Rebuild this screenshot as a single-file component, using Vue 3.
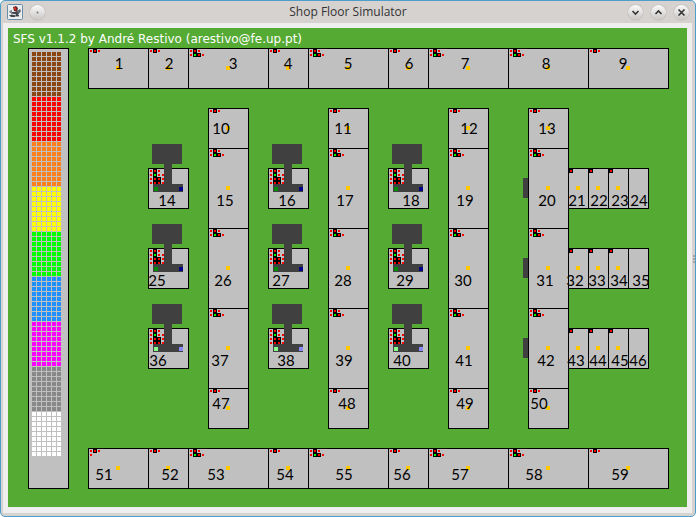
<script setup>
const TITLE = 'Shop Floor Simulator'
const CREDIT = 'SFS v1.1.2 by André Restivo (arestivo@fe.up.pt)'

// Warehouse stock: one band of nine rows by six columns per piece colour
const stockColours = ['#8b4513', '#ff0000', '#ff7f1a', '#ffff00', '#00ff00', '#1e90ff', '#ff00ff', '#888888', '#ffffff']
const stock = stockColours.flatMap((fill, band) =>
  Array.from({ length: 54 }, (_, i) => ({
    fill,
    x: 24 + (i % 6) * 5,
    y: 24 + (band * 9 + Math.floor(i / 6)) * 5
  }))
)

// Status lamps, one string per row: r/g = lamp, R/G = lamp on a black slot
const LAMPS = {
  linear: ['rRr'],
  input: ['rRr', 'r'],
  rotator: ['rRr', 'rGRr'],
  machine: ['rRr', 'rGrr', 'rRRr', 'rRRr'],
  pusher: ['R'],
  none: []
}

const cells = []
function add(id, x, y, w, h, kind, labelX, labelY) {
  const lamps = LAMPS[kind].flatMap((row, r) =>
    [...row].map((c, i) => ({
      x: x + 1 + i * 4,
      y: y + 1 + r * 4,
      slot: c === c.toUpperCase(),
      fill: c.toLowerCase() === 'g' ? '#00ff00' : '#ff0000'
    }))
  )
  cells.push({ id, x, y, w, h, kind, lamps, labelX, labelY, piece: kind !== 'machine' && kind !== 'none' })
}

const rowXs = [80, 140, 180, 260, 300, 380, 420, 500, 580, 660]
const rowKinds = ['linear', 'linear', 'rotator', 'linear', 'rotator', 'linear', 'rotator', 'rotator', 'linear']
function addRow(firstId, y, labelY, labels) {
  labels.forEach((lx, i) => {
    const kind = firstId === 51 && i === 0 ? 'input' : rowKinds[i]
    add(firstId + i, rowXs[i], y, rowXs[i + 1] - rowXs[i], 40, kind, lx, labelY)
  })
}

const laneXs = [200, 320, 440, 520]
function addShort(firstId, y, labelY, labels) {
  labels.forEach((lx, i) => add(firstId + i, laneXs[i], y, 40, 40, 'linear', lx, labelY))
}

function addBlock(firstId, y, labelY, labels) {
  const slots = [
    [140, 'machine'], [200, 'rotator'], [260, 'machine'], [320, 'rotator'], [380, 'machine'],
    [440, 'rotator'], [520, 'rotator'], [560, 'pusher'], [580, 'pusher'], [600, 'pusher'], [620, 'none']
  ]
  slots.forEach(([x, kind], i) => {
    const tall = kind === 'rotator'
    const narrow = kind === 'pusher' || kind === 'none'
    add(firstId + i, x, tall ? y : y + 20, narrow ? 20 : 40, tall ? 80 : 40, kind, labels[i], labelY)
  })
}

addRow(1, 20, 41, [111, 161, 225, 280, 340, 401, 457, 538, 615])
addShort(10, 80, 106, [213, 335, 461, 539])
addBlock(14, 120, 178, [159, 217, 279, 337, 403, 457, 539, 569, 591, 612, 631])
addBlock(25, 200, 258, [149, 215, 273, 335, 397, 455, 537, 567, 589, 611, 633])
addBlock(36, 280, 338, [150, 212, 278, 336, 394, 456, 538, 568, 590, 612, 630])
addShort(47, 360, 381, [213, 339, 457, 531])
addRow(51, 420, 452, [96, 162, 208, 277, 336, 394, 452, 526, 612])

const backs = [150, 230, 310]
</script>

<template>
  <main class="window">
    <header class="titlebar">
      <div class="side">
        <svg class="app-icon" viewBox="0 0 16 16" aria-hidden="true">
          <rect x=".5" y=".5" width="15" height="15" rx="1" fill="#e9edf0" stroke="#6d8ca6" />
          <path d="M2 11h10v2H4zM4 8h7v4H5z" fill="#3d464d" />
          <path d="M10 7l3-2 1 2-3 4z" fill="#59656e" />
          <path d="M2 7l3-1v3H3z" fill="#7d8991" />
          <path d="M6 3l3-1 2 2-1 4-3-1z" fill="#6b2928" />
          <path d="M7 3l2 1v2L7 5z" fill="#e52b24" />
          <path d="M5 10l4 1M8 13h4" stroke="#fff" />
        </svg>
        <button class="round" type="button" aria-label="Window menu">
          <svg viewBox="0 0 15 15"><circle cx="7.5" cy="7.5" r="1" fill="#777" /></svg>
        </button>
      </div>
      <h1>{{ TITLE }}</h1>
      <div class="side controls">
        <button class="round" type="button" aria-label="Minimize">
          <svg viewBox="0 0 15 15"><path d="M4.5 6l3 3 3-3" /></svg>
        </button>
        <button class="round" type="button" aria-label="Maximize">
          <svg viewBox="0 0 15 15"><path d="M4.5 9l3-3 3 3" /></svg>
        </button>
        <button class="round" type="button" aria-label="Close">
          <svg viewBox="0 0 15 15"><path d="M4.5 4.5l6 6M10.5 4.5l-6 6" /></svg>
        </button>
      </div>
    </header>

    <section class="content">
      <svg class="floor" viewBox="0 0 679 479">
        <text class="credit" x="5" y="15">{{ CREDIT }}</text>

        <rect class="box" x="20.5" y="20.5" width="40" height="440" />
        <rect v-for="(p, i) in stock" :key="i" :x="p.x" :y="p.y" width="4" height="4" :fill="p.fill" />

        <rect v-for="y in backs" :key="y" class="metal" x="515" :y="y" width="10" height="20" />

        <g v-for="c in cells" :key="c.id">
          <rect class="box" :x="c.x + 0.5" :y="c.y + 0.5" :width="c.w" :height="c.h" />
          <template v-for="(l, i) in c.lamps" :key="i">
            <rect v-if="l.slot" :x="l.x" :y="l.y" width="4" height="4" />
            <rect :x="l.x + 1" :y="l.y + 1" width="2" height="2" :fill="l.fill" />
          </template>
          <rect v-if="c.piece" class="piece" :x="c.x + c.w / 2 - 2" :y="c.y + c.h / 2 - 2" width="4" height="4" />
          <template v-if="c.kind === 'machine'">
            <path class="metal" :d="`M${c.x + 4} ${c.y - 24}h30v20h-10v20h11v8h-30v-8h11v-20h-12z`" />
            <rect :x="c.x + 6" :y="c.y + 19" width="4" height="4" :fill="c.id > 35 ? '#88ff88' : '#008800'" />
            <rect :x="c.x + 31" :y="c.y + 19" width="4" height="4" :fill="c.id > 35 ? '#8888ff' : '#000088'" />
          </template>
          <text class="label" :x="c.labelX" :y="c.labelY">{{ c.id }}</text>
        </g>
      </svg>
    </section>
    <span class="grip"><i></i><i></i><i></i></span>
  </main>
</template>

<style>
body {
  margin: 0;
  background: #fff;
}
</style>

<style scoped>
.window {
  position: relative;
  box-sizing: border-box;
  border: 1px solid #4f9dcb;
  border-radius: 5px;
  background: #d6d2d0;
  padding: 0 3px 3px 2px;
}

.titlebar {
  display: flex;
  align-items: center;
  height: 22px;
  padding: 0 3px 0 4px;
  font-family: "Open Sans", sans-serif;
}

.side {
  display: flex;
  flex: 1;
  align-items: center;
  gap: 7px;
}

.controls {
  justify-content: flex-end;
  gap: 8px;
}

h1 {
  margin: 0;
  font-size: 12px;
  line-height: 20px;
  font-weight: 400;
  color: #333;
}

.app-icon {
  width: 16px;
  height: 16px;
}

.round {
  display: block;
  width: 15px;
  height: 15px;
  padding: 0;
  border: 0;
  border-radius: 50%;
  background: linear-gradient(#fafafa, #c9c6c4);
  box-shadow: 0 0 1px 0 #777472;
}

.round svg {
  display: block;
  width: 15px;
  height: 15px;
}

.round path {
  fill: none;
  stroke: #333;
  stroke-width: 1.6;
}

.content {
  padding: 5px 5px 6px;
  background: #eee;
}

.floor {
  display: block;
  width: 100%;
  height: auto;
  background: #55aa33;
  shape-rendering: crispEdges;
}

.credit {
  font: 12px "DejaVu Sans", sans-serif;
  fill: #fff;
}

.box {
  fill: #c0c0c0;
  stroke: #000;
}

.metal {
  fill: #404040;
}

.piece {
  fill: #ffc800;
}

.label {
  font: 15px Lato, sans-serif;
  text-anchor: middle;
}

.grip {
  position: absolute;
  top: 50%;
  right: 0;
  display: grid;
  gap: 2px;
  transform: translateY(-50%);
}

.grip i {
  width: 2px;
  height: 1px;
  background: #777;
}
</style>
